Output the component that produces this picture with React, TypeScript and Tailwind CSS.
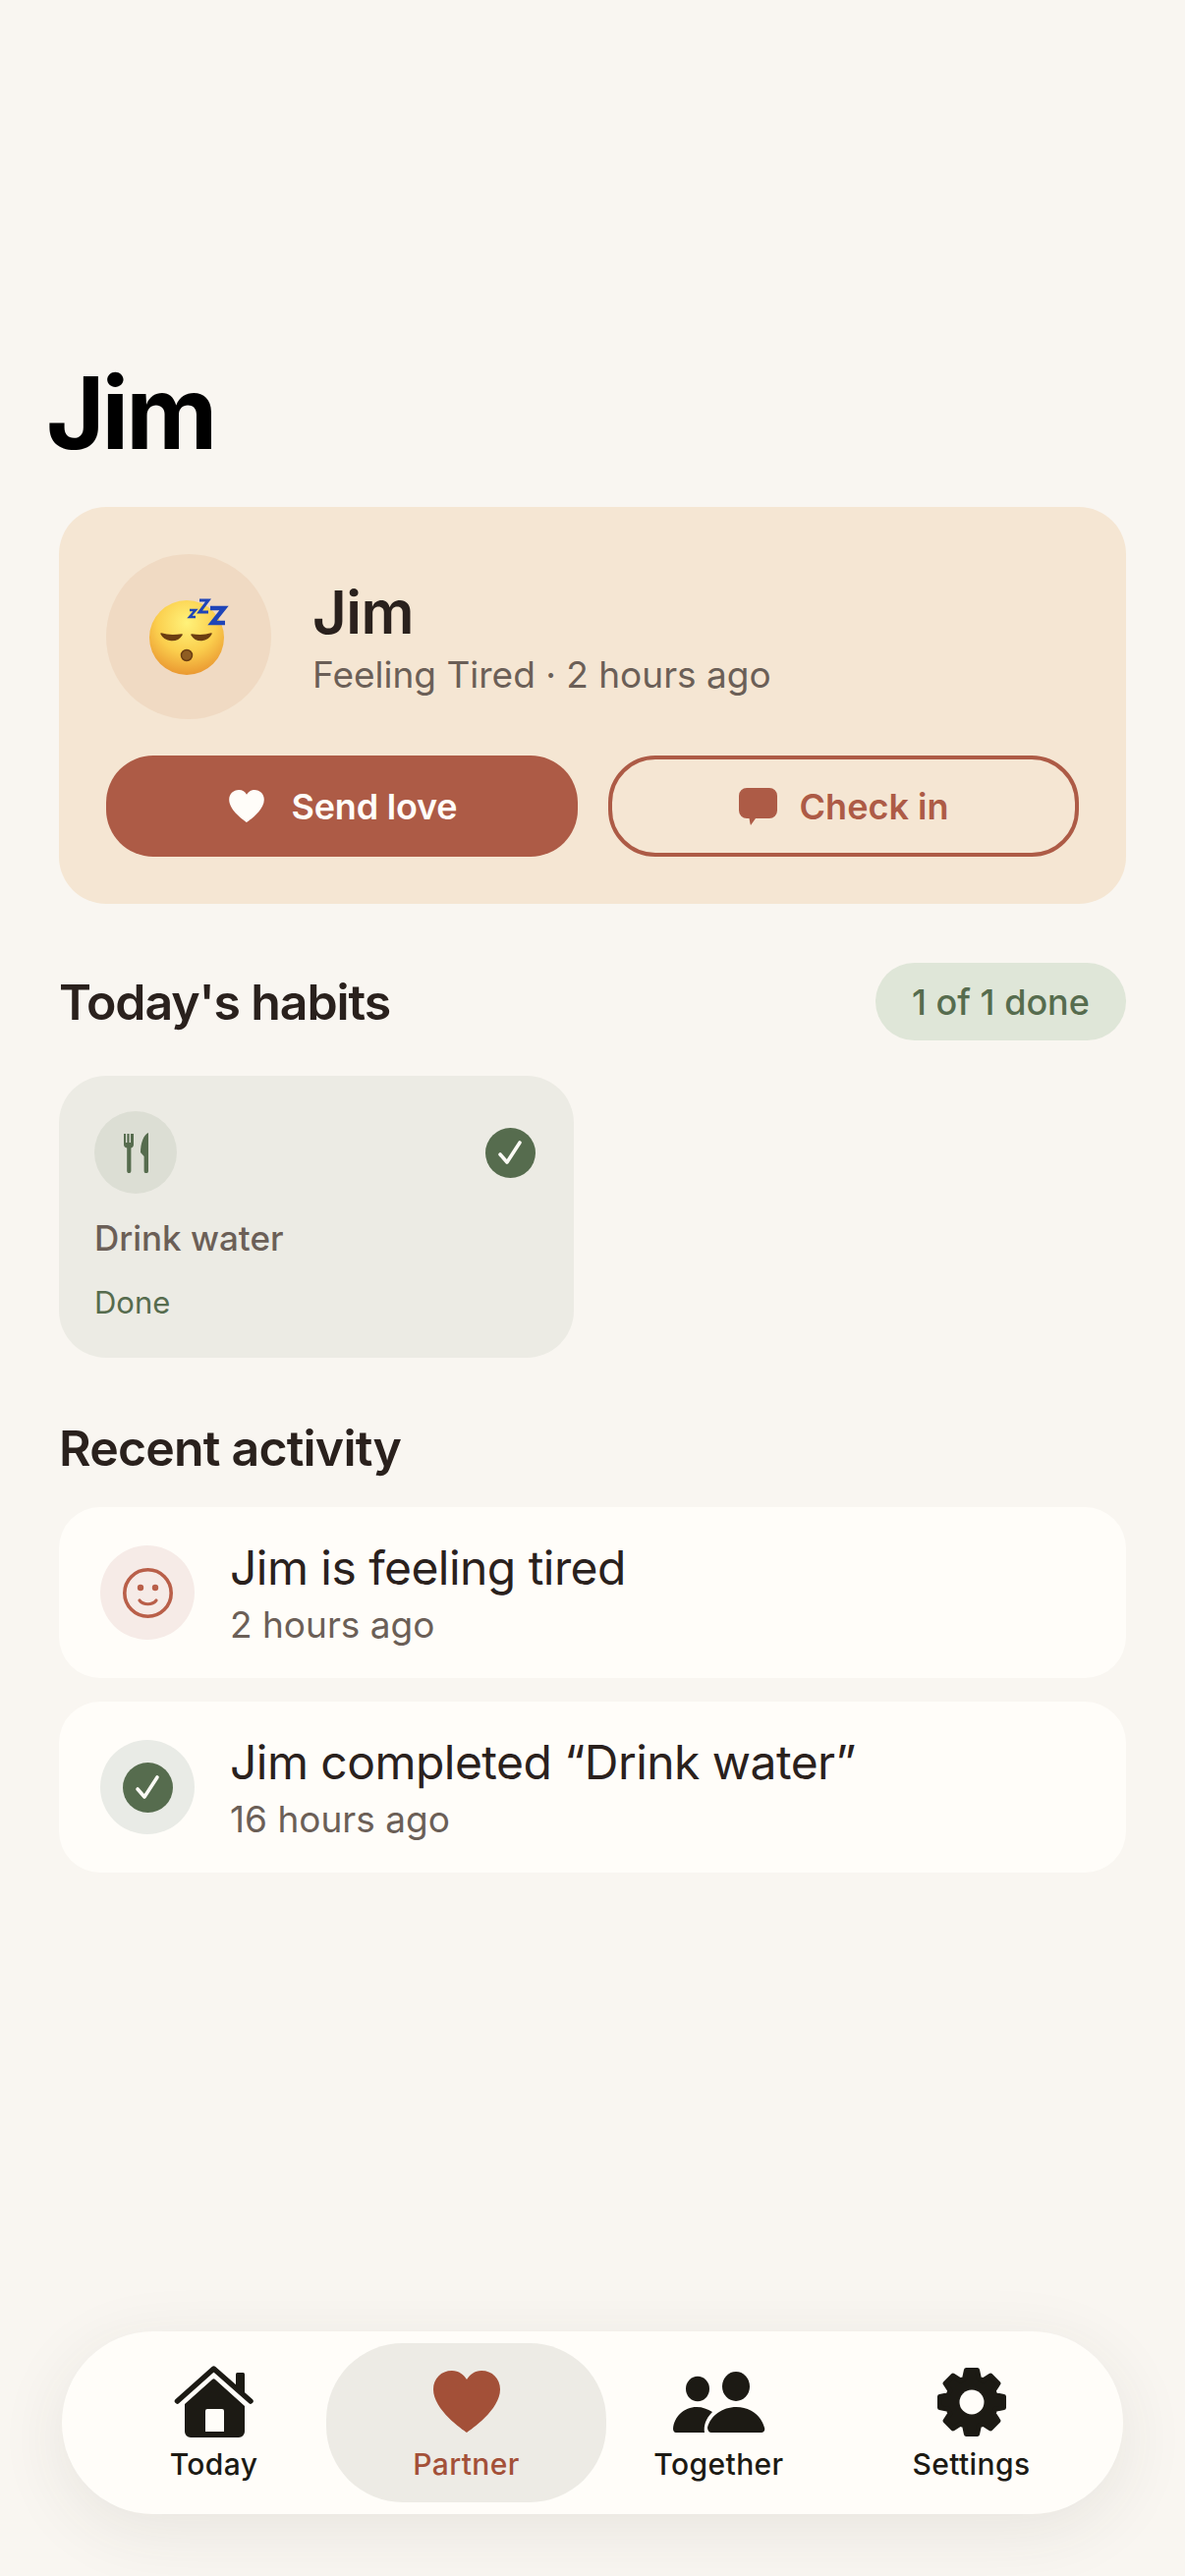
import type { ReactNode } from 'react';

const HEART = 'M34 63C30 60 0 40 0 19C0 8 8 0 19 0C26 0 31 4 34 9C37 4 42 0 49 0C60 0 68 8 68 19C68 40 38 60 34 63Z';

const gearPath = () => {
  // 8 teeth, computed instead of typing out 32 points
  const pts: string[] = [];
  for (let i = 0; i < 8; i++) {
    const a = (i * Math.PI) / 4 - Math.PI / 2;
    const corners: [number, number][] = [
      [25, -0.3],
      [33, -0.17],
      [33, 0.17],
      [25, 0.3],
    ];
    corners.forEach(([r, d]) => {
      pts.push(`${(36 + r * Math.cos(a + d)).toFixed(2)} ${(36 + r * Math.sin(a + d)).toFixed(2)}`);
    });
  }
  return `M${pts.join('L')}Z`;
};

const SleepyFace = () => (
  <svg width="92" height="92" viewBox="0 0 92 92">
    <defs>
      <radialGradient id="face" cx="50%" cy="30%" r="72%">
        <stop offset="0%" stopColor="#fff27a" />
        <stop offset="55%" stopColor="#fbcf4e" />
        <stop offset="100%" stopColor="#e9952f" />
      </radialGradient>
    </defs>
    <circle cx="38" cy="53" r="38" fill="url(#face)" />
    <path d="M12 49c4 8 16 9 21 1c-6 1-15 1-21-1Z" fill="#6b3e12" stroke="#6b3e12" strokeWidth="1.5" strokeLinejoin="round" />
    <path d="M43 50c5 8 16 7 20-1c-6 2-14 2-20 1Z" fill="#6b3e12" stroke="#6b3e12" strokeWidth="1.5" strokeLinejoin="round" />
    <ellipse cx="38" cy="71" rx="5.500" ry="5.500" fill="#8f5d22" stroke="#6b3e12" strokeWidth="1.5" />
    <g fill="none" stroke="#1f45b8" strokeLinejoin="miter">
      <polyline points="41,25 47,25 41,32 47,32" strokeWidth="2.5" />
      <polyline points="51,15 60,15 51,27 60,27" strokeWidth="3" />
      <polyline points="62,23 76,23 64,38 77,38" strokeWidth="4.500" />
    </g>
  </svg>
);

const CheckDisc = () => (
  <svg width="51" height="51" viewBox="0 0 51 51">
    <circle cx="25.5" cy="25.5" r="25.5" fill="#566c4e" />
    <polyline points="15,27 22,35 35,15" fill="none" stroke="#fbfaf5" strokeWidth="3.6" strokeLinecap="round" strokeLinejoin="round" />
  </svg>
);

const Smiley = () => (
  <svg width="51" height="51" viewBox="0 0 51 51">
    <circle cx="25.5" cy="25.5" r="23.7" fill="none" stroke="#b95f49" strokeWidth="3.6" />
    <circle cx="18" cy="20" r="3.2" fill="#b95f49" />
    <circle cx="33" cy="20" r="3.2" fill="#b95f49" />
    <path d="M17 33c4 5 13 5 17 0" fill="none" stroke="#b95f49" strokeWidth="3.2" strokeLinecap="round" />
  </svg>
);

const ForkKnife = () => (
  <svg width="25" height="41" viewBox="0 0 25 41" fill="#566c4e">
    <path d="M0 1h2v9h1.4V1h2.2v9H7V1h2.2l.8 0v11c0 2-1 3-2.6 3.6V39a2 2 0 0 1-4.2 0V15.6C1 15 0 14 0 12Z" />
    <path d="M25 0V39a2 2 0 0 1-4.4 0V24L17 20C17 11 20 2 25 0Z" />
  </svg>
);

const HomeIcon = () => (
  <svg width="81" height="73" viewBox="0 0 81 73">
    <path d="M3.500 36L40.500 3L78 36" fill="none" stroke="#1c1a14" strokeWidth="5.5" strokeLinecap="round" strokeLinejoin="round" />
    <path d="M63 8.500a1.500 1.500 0 0 1 1.500-1.500h6a1.500 1.500 0 0 1 1.500 1.500V28l-9-8Z" fill="#1c1a14" />
    <path
      fillRule="evenodd"
      d="M11 39L39 14a2.200 2.200 0 0 1 3 0L72 41V67a6 6 0 0 1-6 6H17a6 6 0 0 1-6-6ZM32 67H51V46a2 2 0 0 0-2-2H34a2 2 0 0 0-2 2Z"
      fill="#1c1a14"
    />
  </svg>
);

const HeartIcon = () => (
  <svg width="68" height="63" viewBox="0 0 68 63">
    <path d={HEART} fill="#a35038" />
  </svg>
);

const PeopleIcon = () => (
  <svg width="94" height="62" viewBox="0 0 94 62" fill="#1c1a14">
    <ellipse cx="25" cy="17.5" rx="12" ry="12.7" />
    <ellipse cx="64" cy="15" rx="14" ry="15" />
    <path d="M3 62H32C31 55 33 48 40 41C35 38 30 36 24 36C11 36 1 46 0 58C0 60 1 62 3 62Z" />
    <path d="M39 62H90C92 62 94 60 93 57C90 45 79 36 64.500 36C50 36 38 45 35 57C35 60 37 62 39 62Z" />
  </svg>
);

const GearIcon = () => (
  <svg width="72" height="72" viewBox="0 0 72 72">
    <path d={gearPath()} fill="#1c1a14" stroke="#1c1a14" strokeWidth="5" strokeLinejoin="round" />
    <circle cx="36" cy="36" r="12.5" fill="#fffdf9" />
  </svg>
);

const NavItem = ({ icon, label, active }: { icon: ReactNode; label: string; active?: boolean }) => (
  <div
    className={
      active
        ? 'mx-[-14px] flex h-[162px] flex-col items-center rounded-[78px] bg-[#edebe5] pt-[23px] text-[#a35038]'
        : 'flex h-[162px] flex-col items-center pt-[23px] text-[#1c1a14]'
    }
  >
    <div className="flex h-[73px] items-center justify-center">{icon}</div>
    <span className="mt-[9px] text-[30px] font-medium leading-[36px] tracking-[0.4px]">{label}</span>
  </div>
);

const ActivityRow = ({ icon, iconBg, title, time }: { icon: ReactNode; iconBg: string; title: string; time: string }) => (
  <div className="flex h-[174px] items-center gap-[36px] rounded-[42px] bg-[#fffdf9] pl-[42px]">
    <div className={`flex h-[96px] w-[96px] items-center justify-center rounded-full ${iconBg}`}>{icon}</div>
    <div className="mt-[6px]">
      <div className="text-[48px] leading-[60px] tracking-[-0.55px] text-[#2a211d]">{title}</div>
      <div className="text-[37px] leading-[56px] text-[#6b5f57]">{time}</div>
    </div>
  </div>
);

export default function App() {
  return (
    <div className="flex min-h-[2622px] flex-col bg-[#f9f6f1] font-['Inter',sans-serif]">
      <h1 className="ml-[47px] mt-[360px] text-[102px] font-bold leading-[120px] tracking-[-3px] text-black">Jim</h1>

      <div className="mx-[60px] mt-[36px] rounded-[48px] bg-[#f5e6d3] p-[48px]">
        <div className="flex items-center gap-[42px]">
          <div className="flex h-[168px] w-[168px] items-center justify-center rounded-full bg-[#f0dac3]">
            <div className="ml-[12px] mt-[-12px]">
              <SleepyFace />
            </div>
          </div>
          <div className="mt-[5px]">
            <div className="text-[60px] font-semibold leading-[72px] tracking-[-0.5px] text-[#2a211d]">Jim</div>
            <div className="text-[37px] leading-[56px] text-[#6b5f57]">Feeling Tired · 2 hours ago</div>
          </div>
        </div>
        <div className="mt-[37px] flex gap-[31px]">
          <button className="flex h-[103px] w-[480px] items-center justify-center gap-[28px] rounded-[48px] bg-[#ad5b46] pl-[2px] text-[36px] font-semibold tracking-[-0.2px] text-[#fffdf9]">
            <svg width="36" height="33" viewBox="0 0 68 63">
              <path d={HEART} fill="#fffdf9" />
            </svg>
            Send love
          </button>
          <button className="flex h-[103px] w-[479px] items-center justify-center gap-[23px] rounded-[48px] border-[4px] border-[#ad5b46] text-[36px] font-semibold text-[#ad5b46]">
            <svg width="39" height="38" viewBox="0 0 39 38">
              <path d="M8 0H31a8 8 0 0 1 8 8V23a8 8 0 0 1-8 8H17L12 38C11 35 11 33 10.500 31H8a8 8 0 0 1-8-8V8a8 8 0 0 1 8-8Z" fill="#ad5b46" />
            </svg>
            Check in
          </button>
        </div>
      </div>

      <div className="mx-[60px] mt-[60px] flex items-center justify-between">
        <h2 className="text-[50px] font-semibold leading-[60px] tracking-[-1.1px] text-[#2a211d]">Today's habits</h2>
        <div className="flex h-[79px] w-[255px] items-center justify-center rounded-full bg-[#dfe6d8] text-[36px] font-medium text-[#566c4e]">
          1 of 1 done
        </div>
      </div>

      <div className="ml-[60px] mt-[36px] w-[524px] rounded-[48px] bg-[#ecebe4] pb-[36px] pl-[36px] pr-[39px] pt-[36px]">
        <div className="flex items-center justify-between">
          <div className="flex h-[84px] w-[84px] items-center justify-center rounded-full bg-[#dcded4]">
            <ForkKnife />
          </div>
          <CheckDisc />
        </div>
        <div className="mt-[21px] text-[35px] font-medium leading-[48px] text-[#6b5f57]">Drink water</div>
        <div className="mt-[22px] text-[31px] leading-[40px] text-[#566c4e]">Done</div>
      </div>

      <h2 className="ml-[60px] mt-[62px] text-[50px] font-semibold leading-[60px] tracking-[-0.8px] text-[#2a211d]">Recent activity</h2>

      <div className="mx-[60px] mt-[30px] flex flex-col gap-[24px]">
        <ActivityRow icon={<Smiley />} iconBg="bg-[#f6ebe7]" title="Jim is feeling tired" time="2 hours ago" />
        <ActivityRow icon={<CheckDisc />} iconBg="bg-[#e9ebe6]" title="Jim completed “Drink water”" time="16 hours ago" />
      </div>

      <div className="mx-[63px] mb-[63px] mt-auto grid h-[186px] grid-cols-4 items-center rounded-[93px] bg-[#fffdf9] px-[26px] shadow-[0_16px_70px_rgba(60,50,40,0.09)]">
        <NavItem icon={<HomeIcon />} label="Today" />
        <NavItem icon={<HeartIcon />} label="Partner" active />
        <NavItem icon={<PeopleIcon />} label="Together" />
        <NavItem icon={<GearIcon />} label="Settings" />
      </div>
    </div>
  );
}
